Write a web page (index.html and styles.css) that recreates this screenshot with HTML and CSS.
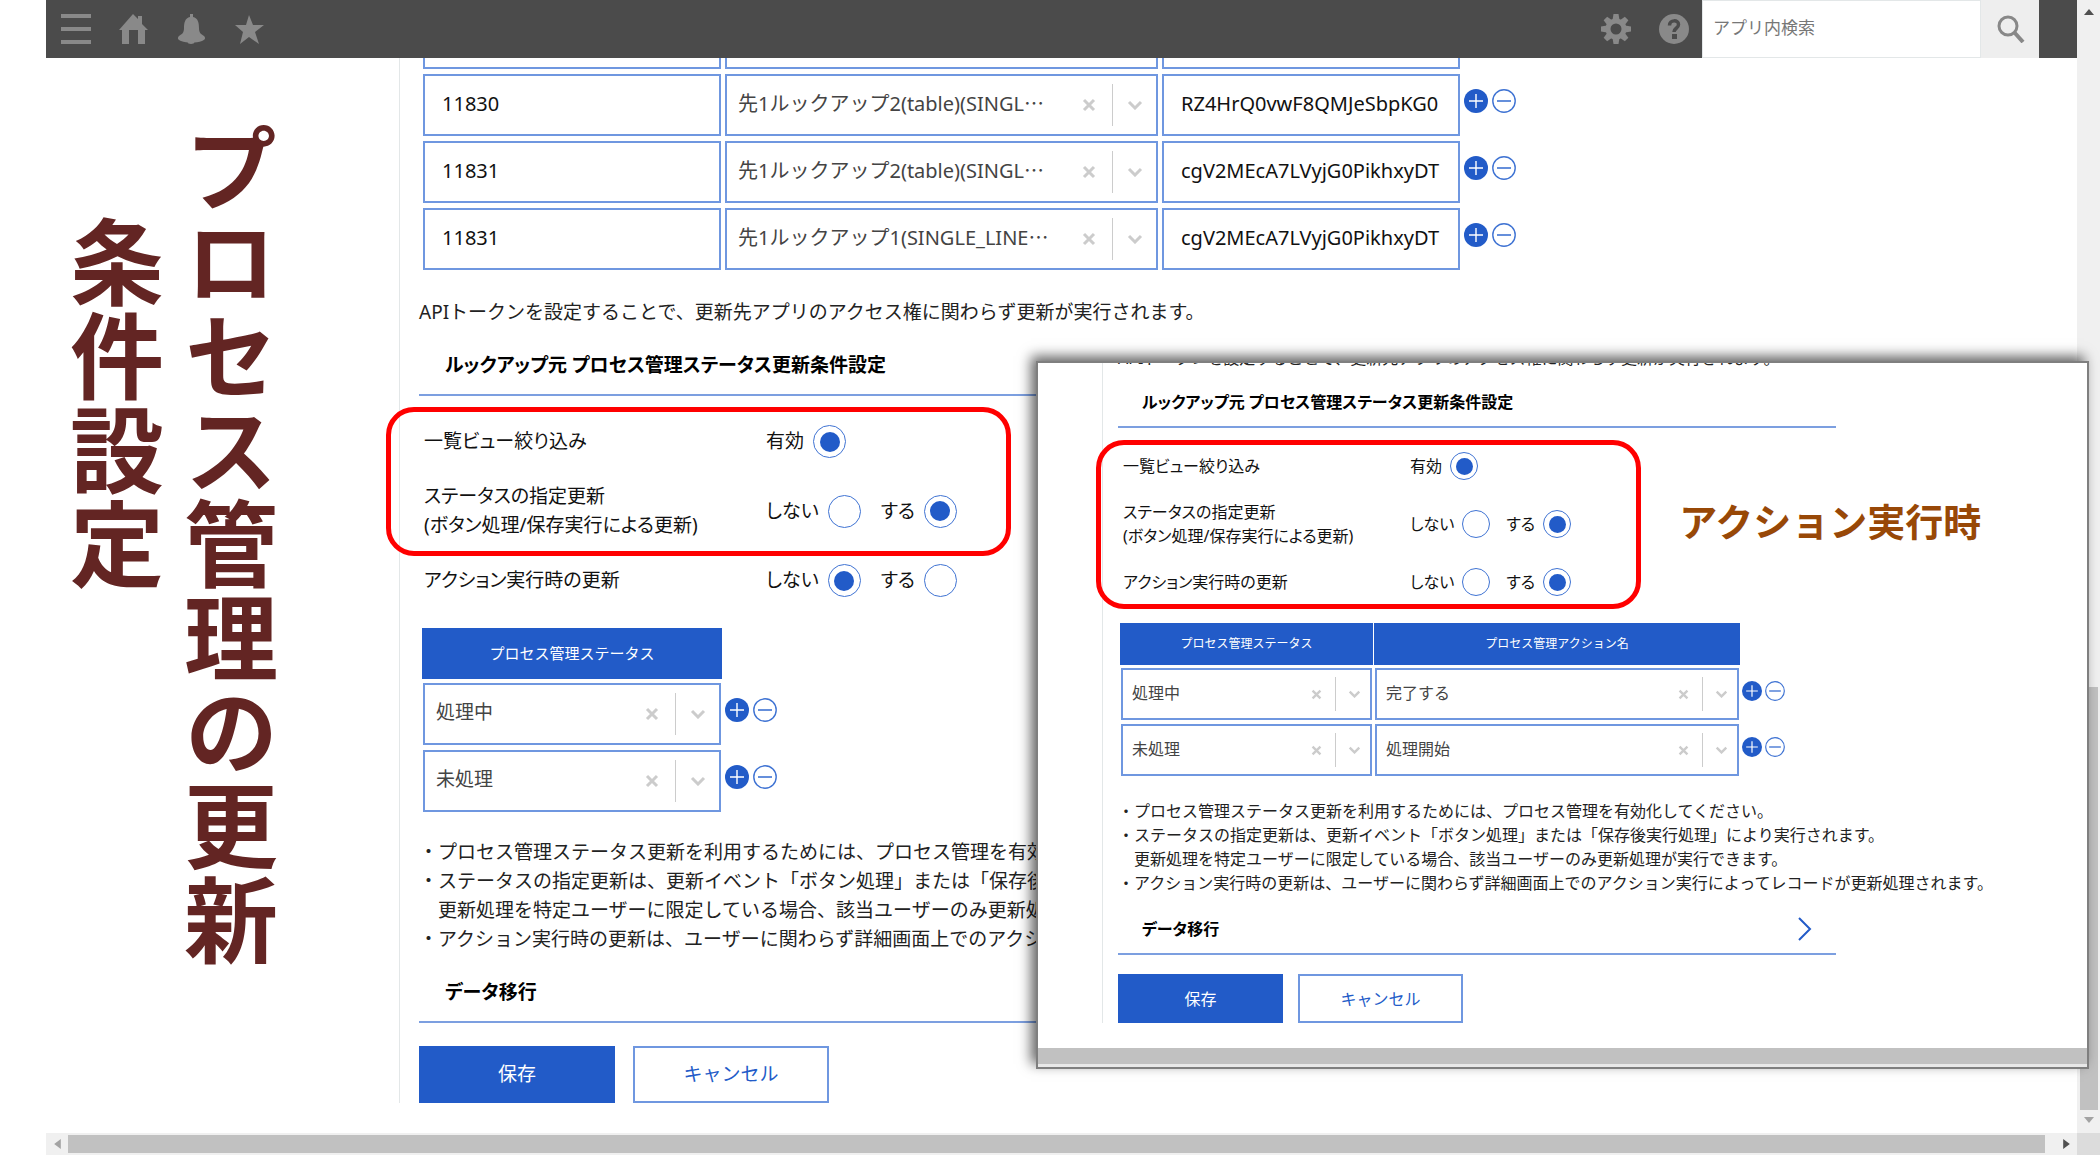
FILE: index.html
```html
<!DOCTYPE html>
<html lang="ja">
<head>
  <meta charset="UTF-8">
  <meta name="viewport" content="width=device-width, initial-scale=1.0">
  <title>プロセス管理の更新条件設定</title>
  <link rel="stylesheet" href="styles.css">
</head>
<body>
  <!-- shared icons -->
  <svg class="sprite" aria-hidden="true">
    <symbol id="clear" viewBox="0 0 14 14"><path d="M2 2l10 10M12 2L2 12" fill="none" stroke="#ccc" stroke-width="3"/></symbol>
    <symbol id="chevron" viewBox="0 0 16 10"><path d="M2 2l6 6 6-6" fill="none" stroke="#ccc" stroke-width="3"/></symbol>
    <symbol id="plus" viewBox="0 0 24 24"><circle cx="12" cy="12" r="12" fill="#225bc8"/><path d="M5 12h14M12 5v14" stroke="#fff" stroke-width="1.4"/></symbol>
    <symbol id="minus" viewBox="0 0 24 24"><circle cx="12" cy="12" r="11.2" fill="#fff" stroke="#3f73d3" stroke-width="1.4"/><path d="M5 12h14" stroke="#3f73d3" stroke-width="1.6"/></symbol>
  </svg>

  <header class="topbar">
    <nav class="nav">
      <button class="icon-btn" type="button" aria-label="メニュー"><svg viewBox="0 0 30 30"><path d="M0 2h30M0 15h30M0 28h30" stroke="currentColor" stroke-width="4"/></svg></button>
      <button class="icon-btn" type="button" aria-label="ホーム"><svg viewBox="0 0 30 30"><path fill="currentColor" d="M14 0l5 5V2h4v8l6 6h-3v14h-7V16h-9v14H3V16H0z"/></svg></button>
      <button class="icon-btn" type="button" aria-label="通知"><svg viewBox="0 0 30 30"><path fill="currentColor" d="M13 0h3v3c5 1 6 6 6 11s2 6 5 8c2 2 1 4-2 5-6 2-15 2-21 0-3-1-4-3-2-5 3-2 5-3 5-8S8 4 13 3zM10 28h8q-1 2-4 2t-4-2z"/></svg></button>
      <button class="icon-btn" type="button" aria-label="お気に入り"><svg viewBox="0 0 30 30"><path fill="currentColor" d="M14 1l4 10h11l-9 7 4 12-10-7-9 7 3-12-8-7h11z"/></svg></button>
    </nav>
    <div class="tools">
      <button class="icon-btn" type="button" aria-label="設定"><svg viewBox="0 0 30 30"><g fill="currentColor"><path id="tooth" d="M12.500 0h5l1 6h-7z"/><use href="#tooth" transform="rotate(45 15 15)"/><use href="#tooth" transform="rotate(90 15 15)"/><use href="#tooth" transform="rotate(135 15 15)"/><use href="#tooth" transform="rotate(180 15 15)"/><use href="#tooth" transform="rotate(225 15 15)"/><use href="#tooth" transform="rotate(270 15 15)"/><use href="#tooth" transform="rotate(315 15 15)"/></g><circle cx="15" cy="15" r="8" fill="none" stroke="currentColor" stroke-width="5"/></svg></button>
      <button class="icon-btn" type="button" aria-label="ヘルプ"><svg viewBox="0 0 30 30"><circle cx="15" cy="15" r="15" fill="currentColor"/><path d="M10.500 11.500c0-6 9-6 9-1 0 4-4.500 3.500-4.500 7.500" fill="none" stroke="#4b4b4b" stroke-width="3.500"/><path d="M13 20h5v5h-5z" fill="#4b4b4b"/></svg></button>
    </div>
    <form class="search">
      <input type="text" placeholder="アプリ内検索" aria-label="アプリ内検索">
      <button type="button" aria-label="検索"><svg viewBox="0 0 28 28"><circle cx="11" cy="11" r="9" fill="none" stroke="#888" stroke-width="3"/><path d="M17 17l9 10" stroke="#888" stroke-width="4"/></svg></button>
    </form>
  </header>

  <main class="screen">
    <h1 class="title">プロセス管理の更新<br>　条件設定</h1>

    <section class="panel">
      <table class="grid lookup">
        <colgroup><col class="col-app"><col class="col-field"><col class="col-token"><col></colgroup>
        <tbody>
          <tr class="cut"><td><div class="box"></div></td><td><div class="box"></div></td><td><div class="box"></div></td><td></td></tr>
          <tr>
            <td><input class="box text" type="text" value="11830" aria-label="アプリID"></td>
            <td><div class="box pick"><select aria-label="フィールド"><option>先1ルックアップ2(table)(SINGL⋯</option></select><button class="clear" type="button" aria-label="クリア"><svg><use href="#clear"/></svg></button><svg class="arrow"><use href="#chevron"/></svg></div></td>
            <td><input class="box text" type="text" value="RZ4HrQ0vwF8QMJeSbpKG0" aria-label="APIトークン"></td>
            <td class="ops"><div><button type="button" aria-label="行を追加"><svg><use href="#plus"/></svg></button><button type="button" aria-label="行を削除"><svg><use href="#minus"/></svg></button></div></td>
          </tr>
          <tr>
            <td><input class="box text" type="text" value="11831" aria-label="アプリID"></td>
            <td><div class="box pick"><select aria-label="フィールド"><option>先1ルックアップ2(table)(SINGL⋯</option></select><button class="clear" type="button" aria-label="クリア"><svg><use href="#clear"/></svg></button><svg class="arrow"><use href="#chevron"/></svg></div></td>
            <td><input class="box text" type="text" value="cgV2MEcA7LVyjG0PikhxyDT" aria-label="APIトークン"></td>
            <td class="ops"><div><button type="button" aria-label="行を追加"><svg><use href="#plus"/></svg></button><button type="button" aria-label="行を削除"><svg><use href="#minus"/></svg></button></div></td>
          </tr>
          <tr>
            <td><input class="box text" type="text" value="11831" aria-label="アプリID"></td>
            <td><div class="box pick"><select aria-label="フィールド"><option>先1ルックアップ1(SINGLE_LINE⋯</option></select><button class="clear" type="button" aria-label="クリア"><svg><use href="#clear"/></svg></button><svg class="arrow"><use href="#chevron"/></svg></div></td>
            <td><input class="box text" type="text" value="cgV2MEcA7LVyjG0PikhxyDT" aria-label="APIトークン"></td>
            <td class="ops"><div><button type="button" aria-label="行を追加"><svg><use href="#plus"/></svg></button><button type="button" aria-label="行を削除"><svg><use href="#minus"/></svg></button></div></td>
          </tr>
        </tbody>
      </table>
      <p class="api-note">APIトークンを設定することで、更新先アプリのアクセス権に関わらず更新が実行されます。</p>

      <h2>ルックアップ元 プロセス管理ステータス更新条件設定</h2>
      <div class="options">
        <div class="marked">
          <div class="option">
            <span class="name">一覧ビュー絞り込み</span>
            <label>有効<input type="radio" name="a-view" checked></label>
          </div>
          <div class="option">
            <span class="name">ステータスの指定更新<br>(ボタン処理/保存実行による更新)</span>
            <label>しない<input type="radio" name="a-status"></label>
            <label>する<input type="radio" name="a-status" checked></label>
          </div>
        </div>
        <div class="option">
          <span class="name">アクション実行時の更新</span>
          <label>しない<input type="radio" name="a-action" checked></label>
          <label>する<input type="radio" name="a-action"></label>
        </div>
      </div>

      <table class="grid process">
        <colgroup><col class="col-status"><col></colgroup>
        <thead><tr><th>プロセス管理ステータス</th></tr></thead>
        <tbody>
          <tr>
            <td><div class="box pick"><select aria-label="ステータス"><option>処理中</option></select><button class="clear" type="button" aria-label="クリア"><svg><use href="#clear"/></svg></button><svg class="arrow"><use href="#chevron"/></svg></div></td>
            <td class="ops"><div><button type="button" aria-label="行を追加"><svg><use href="#plus"/></svg></button><button type="button" aria-label="行を削除"><svg><use href="#minus"/></svg></button></div></td>
          </tr>
          <tr>
            <td><div class="box pick"><select aria-label="ステータス"><option>未処理</option></select><button class="clear" type="button" aria-label="クリア"><svg><use href="#clear"/></svg></button><svg class="arrow"><use href="#chevron"/></svg></div></td>
            <td class="ops"><div><button type="button" aria-label="行を追加"><svg><use href="#plus"/></svg></button><button type="button" aria-label="行を削除"><svg><use href="#minus"/></svg></button></div></td>
          </tr>
        </tbody>
      </table>

      <p class="notes">・プロセス管理ステータス更新を利用するためには、プロセス管理を有効化してください。<br>・ステータスの指定更新は、更新イベント「ボタン処理」または「保存後実行処理」により実行されます。<br>　更新処理を特定ユーザーに限定している場合、該当ユーザーのみ更新処理が実行できます。<br>・アクション実行時の更新は、ユーザーに関わらず詳細画面上でのアクション実行によってレコードが更新処理されます。</p>
      <h2>データ移行</h2>
      <div class="buttons">
        <button class="save" type="button">保存</button>
        <button class="cancel" type="button">キャンセル</button>
      </div>
    </section>

    <div class="vscroll">
      <svg class="tri" viewBox="0 0 10 6"><path d="M0 6l5-6 5 6z" fill="#505050"/></svg>
      <div class="thumb"></div>
      <svg class="tri" viewBox="0 0 10 6"><path d="M0 0h10l-5 6z" fill="#a3a3a3"/></svg>
    </div>
  </main>

  <footer class="hscroll">
    <svg class="tri" viewBox="0 0 8 12"><path d="M8 0v12L0 6z" fill="#a3a3a3"/></svg>
    <div class="thumb"></div>
    <svg class="tri" viewBox="0 0 8 12"><path d="M0 0v12l8-6z" fill="#505050"/></svg>
  </footer>

  <!-- second screen on top -->
  <aside class="window">
    <section class="panel small">
      <p class="api-note">APIトークンを設定することで、更新先アプリのアクセス権に関わらず更新が実行されます。</p>
      <h2>ルックアップ元 プロセス管理ステータス更新条件設定</h2>
      <div class="options">
        <div class="marked">
          <div class="option">
            <span class="name">一覧ビュー絞り込み</span>
            <label>有効<input type="radio" name="b-view" checked></label>
          </div>
          <div class="option">
            <span class="name">ステータスの指定更新<br>(ボタン処理/保存実行による更新)</span>
            <label>しない<input type="radio" name="b-status"></label>
            <label>する<input type="radio" name="b-status" checked></label>
            <strong class="caption">アクション実行時</strong>
          </div>
          <div class="option">
            <span class="name">アクション実行時の更新</span>
            <label>しない<input type="radio" name="b-action"></label>
            <label>する<input type="radio" name="b-action" checked></label>
          </div>
        </div>
      </div>

      <table class="grid process">
        <colgroup><col class="col-status"><col class="col-action"><col></colgroup>
        <thead><tr><th>プロセス管理ステータス</th><th>プロセス管理アクション名</th></tr></thead>
        <tbody>
          <tr>
            <td><div class="box pick"><select aria-label="ステータス"><option>処理中</option></select><button class="clear" type="button" aria-label="クリア"><svg><use href="#clear"/></svg></button><svg class="arrow"><use href="#chevron"/></svg></div></td>
            <td><div class="box pick"><select aria-label="アクション"><option>完了する</option></select><button class="clear" type="button" aria-label="クリア"><svg><use href="#clear"/></svg></button><svg class="arrow"><use href="#chevron"/></svg></div></td>
            <td class="ops"><div><button type="button" aria-label="行を追加"><svg><use href="#plus"/></svg></button><button type="button" aria-label="行を削除"><svg><use href="#minus"/></svg></button></div></td>
          </tr>
          <tr>
            <td><div class="box pick"><select aria-label="ステータス"><option>未処理</option></select><button class="clear" type="button" aria-label="クリア"><svg><use href="#clear"/></svg></button><svg class="arrow"><use href="#chevron"/></svg></div></td>
            <td><div class="box pick"><select aria-label="アクション"><option>処理開始</option></select><button class="clear" type="button" aria-label="クリア"><svg><use href="#clear"/></svg></button><svg class="arrow"><use href="#chevron"/></svg></div></td>
            <td class="ops"><div><button type="button" aria-label="行を追加"><svg><use href="#plus"/></svg></button><button type="button" aria-label="行を削除"><svg><use href="#minus"/></svg></button></div></td>
          </tr>
        </tbody>
      </table>

      <p class="notes">・プロセス管理ステータス更新を利用するためには、プロセス管理を有効化してください。<br>・ステータスの指定更新は、更新イベント「ボタン処理」または「保存後実行処理」により実行されます。<br>　更新処理を特定ユーザーに限定している場合、該当ユーザーのみ更新処理が実行できます。<br>・アクション実行時の更新は、ユーザーに関わらず詳細画面上でのアクション実行によってレコードが更新処理されます。</p>
      <h2>データ移行<svg class="open" viewBox="0 0 14 24"><path d="M1 1l11 11L1 23" fill="none" stroke="#225bc8" stroke-width="2"/></svg></h2>
      <div class="buttons">
        <button class="save" type="button">保存</button>
        <button class="cancel" type="button">キャンセル</button>
      </div>
    </section>
    <div class="window-bar"></div>
  </aside>
</body>
</html>
```

FILE: styles.css
```css
*,
*::before,
*::after {
  box-sizing: border-box;
}

body {
  margin: 0;
  height: 100vh;
  display: flex;
  flex-direction: column;
  position: relative;
  overflow: hidden;
  background: #fff;
  color: #222;
  font-family: "Noto Sans", "Noto Sans CJK JP", sans-serif;
}

button,
input,
select {
  font: inherit;
  margin: 0;
  padding: 0;
  border: none;
  background: none;
  color: inherit;
  border-radius: 0;
}

button {
  cursor: pointer;
}

svg {
  display: block;
}

.sprite {
  position: absolute;
  width: 0;
  height: 0;
}

/* top bar */
.topbar {
  display: flex;
  justify-content: space-between;
  height: 58px;
  flex: none;
  margin: 0 23px 0 46px;
  padding-right: 38px;
  background: #4b4b4b;
  color: #898989;
}

.nav,
.tools {
  display: flex;
  align-items: center;
  gap: 28px;
}

.nav {
  padding-left: 15px;
}

.tools {
  margin-left: auto;
  padding-right: 13px;
}

.icon-btn,
.icon-btn svg {
  width: 30px;
  height: 30px;
}

.search {
  display: flex;
  width: 337px;
}

.search input {
  flex: 1;
  min-width: 0;
  padding: 0 10px 4px;
  background: #fff;
  border: 1px solid #e3e7e8;
  font-size: 17px;
}

.search input::placeholder {
  color: #777;
}

.search button {
  width: 58px;
  padding-left: 16px;
  background: #eee;
}

.search svg {
  width: 28px;
  height: 28px;
}

/* main screen */
.screen {
  flex: 1;
  min-height: 0;
  display: flex;
}

.title {
  flex: 0 0 19%;
  margin: 0;
  padding: 63px 116px 0 0;
  writing-mode: vertical-rl;
  font-size: 94px;
  line-height: 114px;
  font-weight: 700;
  color: #632523;
  white-space: nowrap;
}

.panel {
  --font: 19px;
  --line: 29px;
  --latin: 20px;
  --th-font: 15px;
  --th: 49px;
  --cell: 62px;
  --col-gap: 4px;
  --row-gap: 5px;
  --radio: 33px;
  --dot: 20px;
  --op: 24px;
  --name: 342px;
  --row-space: 24px;
  --label-gap: 9px;
  --option-gap: 20px;
  flex: 1;
  min-width: 0;
  align-self: flex-start;
  padding-left: 19px;
  border-left: 1px solid #e3e7e8;
  font-size: var(--font);
  line-height: var(--line);
}

.panel p {
  margin: 23px 0 0;
  white-space: nowrap;
}

.panel .notes {
  margin-top: 21px;
}

.panel h2 {
  display: flex;
  justify-content: space-between;
  max-width: 850px;
  margin: 12px 0 0;
  padding: 12px 26px 14px;
  border-bottom: 2px solid #7c9fe0;
  color: #000;
  font-size: var(--font);
  font-feature-settings: "palt";
}

/* tables */
.grid {
  table-layout: fixed;
  width: 1px;
  margin: -5px 0 0;
  border-collapse: separate;
  border-spacing: var(--col-gap) var(--row-gap);
}

.process {
  margin-top: 27px;
}

.grid td,
.grid th {
  padding: 0;
}

.grid col {
  width: 52px;
}

.grid .col-app,
.grid .col-token,
.grid .col-status {
  width: 298px;
}

.grid .col-field {
  width: 433px;
}

.grid th {
  height: var(--th);
  background: #225bc8;
  outline: 1px solid #225bc8;
  color: #fff;
  font-size: var(--th-font);
  font-weight: 400;
  white-space: nowrap;
}

.box {
  display: flex;
  width: 100%;
  height: var(--cell);
  border: 2px solid #6f97e0;
  background: #fff;
}

.cut .box {
  height: 11px;
  border-top: none;
}

.text {
  padding: 0 17px 3px;
  color: #111;
  font-size: var(--latin);
}

.pick {
  align-items: center;
  padding: 0 13px 0 11px;
  color: #444;
}

.pick select {
  flex: 1;
  min-width: 0;
  height: 100%;
  padding-bottom: 3px;
  appearance: none;
}

.lookup select {
  font-size: var(--latin);
}

.clear {
  display: flex;
  align-items: center;
  height: 42px;
  padding: 0 16px 0 4px;
  border-right: 1px solid #ccc;
}

.clear svg {
  width: 14px;
  height: 14px;
}

.arrow {
  width: 16px;
  height: 10px;
  margin-left: 14px;
}

.ops div {
  display: flex;
  gap: 4px;
  padding-bottom: 8px;
}

.ops svg {
  width: var(--op);
  height: var(--op);
}

/* radios */
.options {
  margin-top: 29px;
  color: #111;
  font-feature-settings: "palt";
}

.options,
.marked {
  display: flex;
  flex-direction: column;
  gap: var(--row-space);
  position: relative;
}

.marked::after {
  content: "";
  position: absolute;
  inset: -18px auto -16px -33px;
  width: 625px;
  border: 5px solid #f00;
  border-radius: 28px;
  pointer-events: none;
}

.option {
  display: flex;
  align-items: center;
  padding-left: 5px;
}

.option .name {
  flex: 0 0 var(--name);
}

.option label {
  display: flex;
  align-items: center;
  gap: var(--label-gap);
  margin-right: var(--option-gap);
}

.option input {
  appearance: none;
  display: grid;
  place-items: center;
  width: var(--radio);
  height: var(--radio);
  border: 1px solid #3f73d3;
  border-radius: 50%;
}

.option input:checked::before {
  content: "";
  width: var(--dot);
  height: var(--dot);
  border-radius: 50%;
  background: #225bc8;
}

.buttons {
  display: flex;
  gap: 18px;
  margin-top: 23px;
}

.buttons button {
  width: 196px;
  height: 57px;
  border: 2px solid #6f97e0;
}

.buttons .save {
  border-color: #225bc8;
  background: #225bc8;
  color: #fff;
}

.buttons .cancel {
  color: #225bc8;
}

/* window on top */
.window {
  position: absolute;
  top: 361px;
  right: 11px;
  width: calc(50% + 3px);
  overflow: hidden;
  border: 2px solid #7f7f7f;
  background: #fff;
  box-shadow: -5px -5px 12px rgba(0, 0, 0, 0.6);
}

.small {
  --font: 16px;
  --line: 24px;
  --th-font: 12px;
  --th: 40px;
  --cell: 52px;
  --col-gap: 3px;
  --row-gap: 4px;
  --radio: 28px;
  --dot: 17px;
  --op: 20px;
  --name: 287px;
  --row-space: 20px;
  --label-gap: 8px;
  --option-gap: 16px;
  margin-left: 64px;
  padding-left: 15px;
}

.small .api-note {
  margin-top: -17px;
}

.small h2 {
  max-width: 718px;
  margin-top: 10px;
  padding: 10px 24px 12px;
}

.small .open {
  width: 14px;
  height: 24px;
}

.small .options {
  margin-top: 24px;
}

.small .marked::after {
  inset: -12px auto -13px -22px;
  width: 545px;
}

.small .process {
  margin-top: 24px;
}

.small .col-status {
  width: 251px;
}

.small .col-action {
  width: 364px;
}

.small .pick {
  padding: 0 9px;
}

.small .clear {
  height: 34px;
  padding-right: 13px;
}

.small .clear svg {
  width: 11px;
  height: 11px;
}

.small .arrow {
  width: 13px;
  height: 8px;
  margin-left: 12px;
}

.small .ops div {
  gap: 3px;
  padding-bottom: 6px;
}

.small .notes {
  margin-top: 19px;
  padding-bottom: 2px;
}

.small .buttons {
  gap: 15px;
  margin-top: 19px;
}

.small .buttons button {
  width: 165px;
  height: 49px;
}

.caption {
  margin-left: 92px;
  padding-bottom: 6px;
  font-size: 38px;
  line-height: 40px;
  color: #984807;
  font-feature-settings: normal;
}

.window-bar {
  height: 19px;
  margin-top: 25px;
  background: #c1c1c1;
  border-bottom: 3px solid #e8e8e8;
}

/* scrollbars */
.vscroll {
  flex: 0 0 23px;
  display: flex;
  flex-direction: column;
  align-items: center;
  margin-top: -58px;
  padding: 9px 0 10px;
  background: #f0f0f0;
}

.vscroll .tri {
  width: 10px;
  height: 6px;
}

.vscroll .thumb {
  width: 18px;
  flex: 0 0 423px;
  margin: auto 0 7px;
  background: #c1c1c1;
}

.hscroll {
  flex: none;
  display: flex;
  align-items: center;
  height: 22px;
  margin-left: 46px;
  padding: 0 30px 0 8px;
  background: linear-gradient(to left, #dcdcdc 23px, #f0f0f0 23px);
}

.hscroll .tri {
  width: 7px;
  height: 10px;
}

.hscroll .thumb {
  flex: 1;
  height: 18px;
  margin: 0 18px 0 7px;
  background: #c1c1c1;
}
```
